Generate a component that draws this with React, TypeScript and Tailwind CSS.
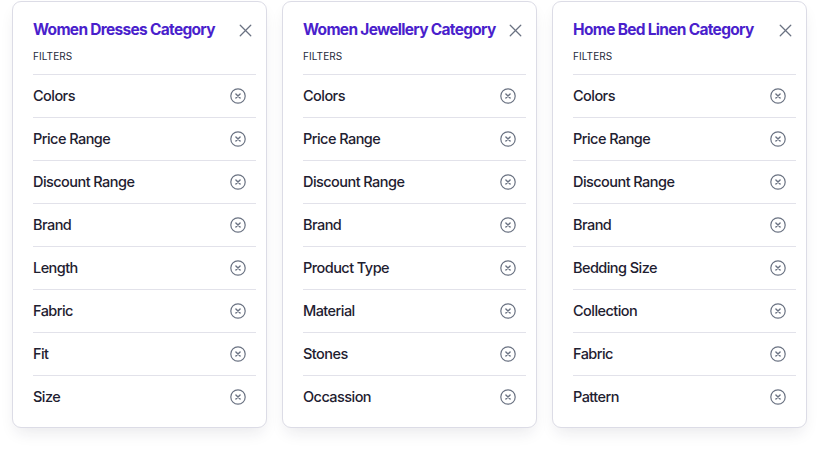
import { X } from "lucide-react";

type Category = { title: string; filters: string[] };

const CATEGORIES: Category[] = [
  {
    title: "Women Dresses Category",
    filters: ["Colors", "Price Range", "Discount Range", "Brand", "Length", "Fabric", "Fit", "Size"],
  },
  {
    title: "Women Jewellery Category",
    filters: ["Colors", "Price Range", "Discount Range", "Brand", "Product Type", "Material", "Stones", "Occassion"],
  },
  {
    title: "Home Bed Linen Category",
    filters: ["Colors", "Price Range", "Discount Range", "Brand", "Bedding Size", "Collection", "Fabric", "Pattern"],
  },
];

function RemoveIcon() {
  return (
    <svg width="16" height="16" viewBox="0 0 16 16" fill="none" className="text-gray-500">
      <circle cx="8" cy="8" r="7.2" stroke="currentColor" strokeWidth="1.2" />
      <path d="M5.9 5.9l4.2 4.2M10.1 5.9l-4.2 4.2" stroke="currentColor" strokeWidth="1.4" strokeLinecap="round" />
    </svg>
  );
}

function FilterCard({ category }: { category: Category }) {
  return (
    <div className="w-[255px] bg-white border border-[#dcdce6] rounded-[9px] shadow-[0_8px_16px_-4px_rgba(30,30,60,0.10)] pl-[20px] pr-[10px] pt-[16px] pb-[9px]">
      <div className="flex items-center justify-between h-6">
        <h2 className="text-[15.5px] font-bold text-[#4a1fcc] tracking-[-0.7px] whitespace-nowrap">{category.title}</h2>
        <X size={21} strokeWidth={1.5} className="text-gray-500" />
      </div>
      <p className="mt-[6px] text-[10px] leading-4 text-gray-800 uppercase tracking-[0.1px]">Filters</p>
      <ul className="mt-[10px]">
        {category.filters.map((f) => (
          <li key={f} className="h-[43px] border-t border-[#e2e2ea] flex items-center justify-between">
            <span className="text-[14.5px] leading-5 font-medium text-[#1e2030] tracking-[-0.55px]">{f}</span>
            <span className="mr-[10px] flex">
              <RemoveIcon />
            </span>
          </li>
        ))}
      </ul>
    </div>
  );
}

export default function App() {
  return (
    <div className="w-[819px] h-[453px] bg-white pl-[12px] pt-[1px] flex gap-[15px] items-start" style={{ fontFamily: "Inter, 'Noto Sans', sans-serif" }}>
      {CATEGORIES.map((c) => (
        <FilterCard key={c.title} category={c} />
      ))}
    </div>
  );
}
